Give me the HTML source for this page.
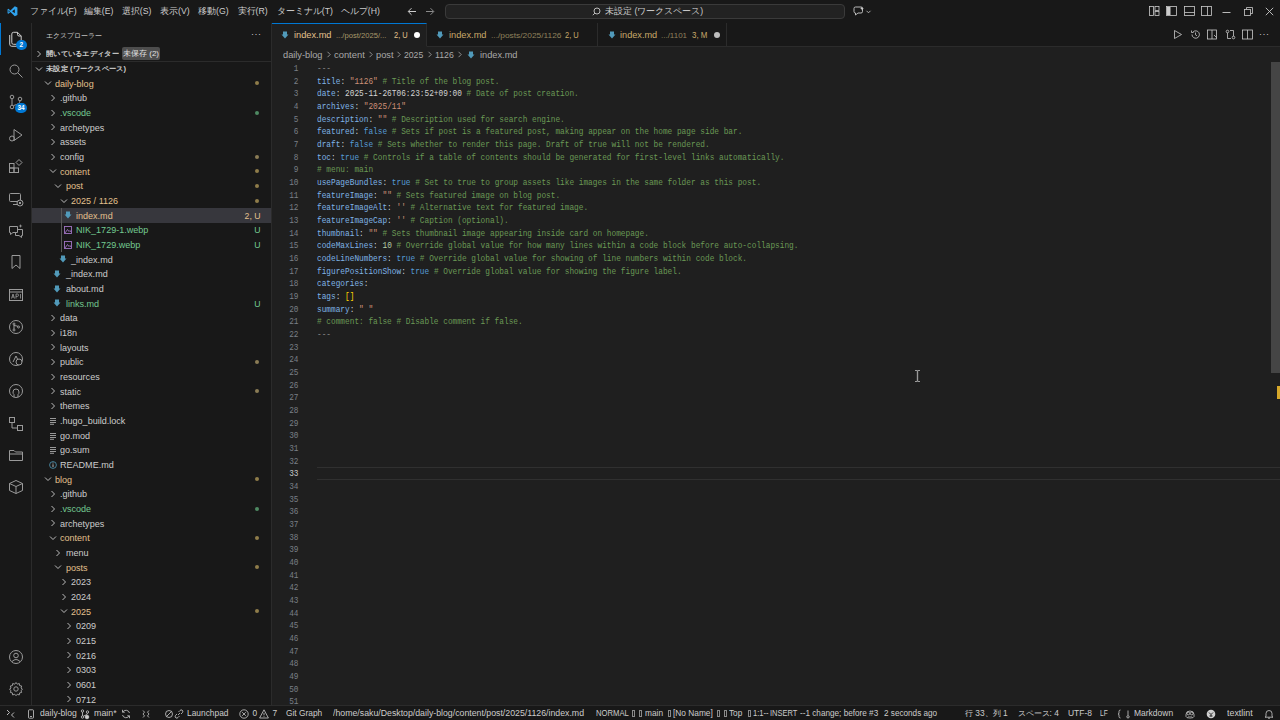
<!DOCTYPE html>
<html><head><meta charset="utf-8"><title>VS Code</title><style>
*{margin:0;padding:0;box-sizing:border-box}
html,body{width:1280px;height:720px;overflow:hidden;background:#1f1f1f;font-family:"Liberation Sans",sans-serif;color:#cccccc}
.abs{position:absolute}
#title{position:absolute;left:0;top:0;width:1280px;height:23.3px;background:#181818}
.menu{position:absolute;top:5px;font-size:8.7px;line-height:12px;color:#cccccc;white-space:nowrap}
#search{position:absolute;left:444.5px;top:3.7px;width:400.5px;height:15.8px;border:0.7px solid #3a3a3a;border-radius:4px;background:#222222}
#act{position:absolute;left:0;top:23.3px;width:32px;height:682px;background:#181818;border-right:0.67px solid #2b2b2b}
#side{position:absolute;left:32px;top:23.3px;width:239.5px;height:682px;background:#181818;border-right:0.67px solid #2b2b2b;overflow:hidden}
.row{position:absolute;left:0;width:239.5px;height:14.67px;font-size:8.7px;line-height:14.67px;white-space:nowrap}
.row .t,.row .bd{padding-top:0.5px}
.row .t{transform:scaleX(1.04);transform-origin:0 50%}
.row .t{position:absolute;top:0}
.row .ch{position:absolute;top:3.3px;width:8px;height:8px}
.row .dot{position:absolute;left:222.5px;top:5.3px;width:4px;height:4px;border-radius:50%}
.row .bd{position:absolute;right:11px;top:0;font-size:8.7px}
#tabs{position:absolute;left:271.5px;top:23.3px;width:1008.5px;height:23.3px;background:#181818;border-bottom:0.67px solid #2b2b2b}
.tab{position:absolute;top:0;height:23.3px;font-size:8.7px;line-height:23px;white-space:nowrap;border-right:0.67px solid #2b2b2b}
#crumbs{position:absolute;left:271.5px;top:46.7px;width:1008.5px;height:14.67px;font-size:8.7px;line-height:16.67px;color:#a9a9a9;white-space:nowrap}
#code{position:absolute;left:272px;top:62.7px;width:1008px;height:644px;overflow:hidden}
.ln{position:absolute;left:0;width:26.5px;text-align:right;font-family:"Liberation Mono",monospace;font-size:9.33px;line-height:12.67px;color:#7a7f87;transform:scaleX(0.83);transform-origin:100% 0}
.cl{position:absolute;left:44.5px;font-family:"Liberation Mono",monospace;font-size:9.33px;line-height:12.67px;white-space:pre;transform:scaleX(0.835);transform-origin:0 0;color:#cccccc}
.k{color:#7fb4e6}.b{color:#569cd6}.s{color:#ce9178}.c{color:#6a9955}.n{color:#b5cea8}.p{color:#d4d4d4}.y{color:#ffd700}.g{color:#8a8a8a}
#status{position:absolute;left:0;top:705.3px;width:1280px;height:14.7px;background:#181818;border-top:0.67px solid #2b2b2b;font-size:8.4px;line-height:14px;color:#cccccc;white-space:nowrap}
#status span{position:absolute;top:0}
svg{position:absolute;overflow:visible}
</style></head>
<body>
<div id="title">
<svg style="left:6.8px;top:5.6px" width="11" height="10.5" viewBox="0 0 100 100"><path d="M72 3 L97 15 V85 L72 97 L30 58 L12 73 L3 68 V32 L12 27 L30 42 Z M72 30 L46 50 L72 70 Z M13 38 V62 L25 50 Z" fill="#2fa3ee" fill-rule="evenodd"/></svg>
<div class="menu" style="left:29.5px">ファイル(F)</div>
<div class="menu" style="left:83.8px">編集(E)</div>
<div class="menu" style="left:121.8px">選択(S)</div>
<div class="menu" style="left:160px">表示(V)</div>
<div class="menu" style="left:198px">移動(G)</div>
<div class="menu" style="left:237.5px">実行(R)</div>
<div class="menu" style="left:276.8px">ターミナル(T)</div>
<div class="menu" style="left:340.8px">ヘルプ(H)</div>
<svg style="left:407px;top:6.5px" width="10" height="9" viewBox="0 0 10 9"><path d="M9 4.5H1.5M4.5 1.2L1.2 4.5L4.5 7.8" stroke="#cccccc" stroke-width="1" fill="none"/></svg>
<svg style="left:424.5px;top:6.5px" width="10" height="9" viewBox="0 0 10 9"><path d="M1 4.5H8.5M5.5 1.2L8.8 4.5L5.5 7.8" stroke="#8b8b8b" stroke-width="1" fill="none"/></svg>
<div id="search"></div>
<svg style="left:592px;top:7px" width="9" height="9" viewBox="0 0 9 9"><circle cx="5" cy="4" r="3" stroke="#cccccc" stroke-width="0.9" fill="none"/><path d="M2.9 6.1L0.8 8.2" stroke="#cccccc" stroke-width="0.9"/></svg>
<div class="menu" style="left:605px;top:5px">未設定 (ワークスペース)</div>
<svg style="left:853px;top:6px" width="12" height="10" viewBox="0 0 12 10"><path d="M1 2.5Q1 1 2.5 1H8Q9.5 1 9.5 2.5V5.5Q9.5 7 8 7H5L2.5 9V7Q1 7 1 5.5Z" stroke="#cccccc" stroke-width="0.9" fill="none"/><path d="M9 0.5L9.6 2L11 2.5L9.6 3L9 4.5L8.4 3L7 2.5L8.4 2Z" fill="#cccccc"/></svg>
<svg style="left:866px;top:9.5px" width="5" height="4" viewBox="0 0 5 4"><path d="M0.5 0.8L2.5 2.8L4.5 0.8" stroke="#cccccc" stroke-width="0.8" fill="none"/></svg>
<svg style="left:1148.5px;top:6px" width="11" height="10" viewBox="0 0 11 10"><rect x="0.5" y="0.5" width="4" height="9" stroke="#cccccc" stroke-width="0.8" fill="none"/><rect x="6" y="0.5" width="4" height="4" stroke="#cccccc" stroke-width="0.8" fill="none"/><rect x="6" y="5.5" width="4" height="4" stroke="#cccccc" stroke-width="0.8" fill="none"/></svg>
<svg style="left:1166px;top:6px" width="11" height="10" viewBox="0 0 11 10"><rect x="0.5" y="0.5" width="10" height="9" stroke="#cccccc" stroke-width="0.8" fill="none"/><rect x="1" y="1" width="3.5" height="8" fill="#cccccc"/></svg>
<svg style="left:1183.5px;top:6px" width="11" height="10" viewBox="0 0 11 10"><rect x="0.5" y="0.5" width="10" height="9" stroke="#cccccc" stroke-width="0.8" fill="none"/><path d="M0.5 6.5H10.5" stroke="#cccccc" stroke-width="0.8"/></svg>
<svg style="left:1201px;top:6px" width="11" height="10" viewBox="0 0 11 10"><rect x="0.5" y="0.5" width="10" height="9" stroke="#cccccc" stroke-width="0.8" fill="none"/><path d="M6.5 0.5V9.5" stroke="#cccccc" stroke-width="0.8"/></svg>
<svg style="left:1222px;top:6px" width="9" height="10" viewBox="0 0 9 10"><path d="M0.5 6.5H8.5" stroke="#cccccc" stroke-width="0.9"/></svg>
<svg style="left:1243.5px;top:6.5px" width="9" height="9" viewBox="0 0 9 9"><rect x="0.5" y="2.5" width="6" height="6" stroke="#cccccc" stroke-width="0.8" fill="none"/><path d="M2.5 2.5V0.5H8.5V6.5H6.5" stroke="#cccccc" stroke-width="0.8" fill="none"/></svg>
<svg style="left:1265px;top:7px" width="9" height="9" viewBox="0 0 9 9"><path d="M0.8 0.8L8.2 8.2M8.2 0.8L0.8 8.2" stroke="#cccccc" stroke-width="0.9"/></svg>
</div>
<div id="act">
<div class="abs" style="left:0;top:0;width:1.4px;height:32px;background:#0078d4"></div>
<svg style="left:8px;top:7.45px" width="16" height="16" viewBox="0 0 16 16" stroke="#cccccc" stroke-width="1" fill="none"><path d="M1.7 4V13.2Q1.7 15.3 3.8 15.3H9"/><path d="M3.8 3Q3.8 1.3 5.5 1.3H9.5L13.2 5V11.8Q13.2 13.3 11.7 13.3H5.5Q3.8 13.3 3.8 11.8Z"/><path d="M9.5 1.3V3.5Q9.5 5 11 5H13.2"/></svg>
<svg style="left:8px;top:39.45px" width="16" height="16" viewBox="0 0 16 16" stroke="#9a9a9a" stroke-width="1" fill="none"><circle cx="6.5" cy="6.5" r="4.5"/><path d="M9.8 9.8L14.5 14.5"/></svg>
<svg style="left:8px;top:71.20px" width="16" height="16" viewBox="0 0 16 16" stroke="#9a9a9a" stroke-width="1" fill="none"><circle cx="4" cy="3" r="1.8"/><circle cx="4" cy="13" r="1.8"/><circle cx="12" cy="5" r="1.8"/><path d="M4 4.8V11.2M12 6.8Q12 10 5.5 11.5"/></svg>
<svg style="left:8px;top:103.70px" width="16" height="16" viewBox="0 0 16 16" stroke="#9a9a9a" stroke-width="1" fill="none"><path d="M6 2.5L14 8L6 13.5Z"/><circle cx="4" cy="11.5" r="2.5"/></svg>
<svg style="left:8px;top:135.20px" width="16" height="16" viewBox="0 0 16 16" stroke="#9a9a9a" stroke-width="1" fill="none"><rect x="1.5" y="5.5" width="4.5" height="4.5"/><rect x="1.5" y="10" width="4.5" height="4.5"/><rect x="6" y="10" width="4.5" height="4.5"/><path d="M8 4.5L11 1.5L14 4.5L11 7.5Z"/></svg>
<svg style="left:8px;top:167.45px" width="16" height="16" viewBox="0 0 16 16" stroke="#9a9a9a" stroke-width="1" fill="none"><rect x="1.5" y="2.5" width="11" height="8" rx="1"/><path d="M5 13.5H9"/><circle cx="12" cy="12" r="3" fill="#181818"/><path d="M10.8 10.8L13.2 13.2M13.2 10.8L10.8 13.2"/></svg>
<svg style="left:8px;top:199.70px" width="16" height="16" viewBox="0 0 16 16" stroke="#9a9a9a" stroke-width="1" fill="none"><path d="M1.5 3.5H9.5V9.5H5L2.5 11.5V9.5H1.5Z"/><path d="M9.5 6.5H14.5V12.5H13.5V14.5L11 12.5H7.5V9.5"/><path d="M12.5 1L13 2.5L14.5 3L13 3.5L12.5 5L12 3.5L10.5 3L12 2.5Z" fill="#9a9a9a" stroke="none"/></svg>
<svg style="left:8px;top:231.20px" width="16" height="16" viewBox="0 0 16 16" stroke="#9a9a9a" stroke-width="1" fill="none"><path d="M4 1.5H12V14.5L8 11L4 14.5Z"/></svg>
<svg style="left:8px;top:263.70px" width="16" height="16" viewBox="0 0 16 16" stroke="#9a9a9a" stroke-width="1" fill="none"><rect x="1.5" y="2.5" width="13" height="11"/><path d="M1.5 5H14.5"/><path d="M3.5 11.5L5 7L6.5 11.5M4 10H6M8 11.5V7H9.5Q10.5 7 10.5 8.2Q10.5 9.4 9.5 9.4H8M12.5 7V11.5" stroke-width="0.8"/></svg>
<svg style="left:8px;top:296.20px" width="16" height="16" viewBox="0 0 16 16" stroke="#9a9a9a" stroke-width="1" fill="none"><circle cx="8" cy="8" r="6.5"/><circle cx="6" cy="5" r="1"/><circle cx="6" cy="11" r="1"/><circle cx="10.5" cy="8" r="1"/><path d="M6 6V10M6 6.5Q10 7 10 7.5"/></svg>
<svg style="left:8px;top:327.70px" width="16" height="16" viewBox="0 0 16 16" stroke="#9a9a9a" stroke-width="1" fill="none"><circle cx="8" cy="8" r="6.5"/><path d="M5 11L8 5L11 11"/><circle cx="11" cy="11" r="3" fill="#181818"/></svg>
<svg style="left:8px;top:359.70px" width="16" height="16" viewBox="0 0 16 16" stroke="#9a9a9a" stroke-width="1" fill="none"><circle cx="8" cy="8" r="6.5"/><path d="M6 14V11.5Q5 11 5 9Q5 6 8 6Q11 6 11 9Q11 11 10 11.5V14" /></svg>
<svg style="left:8px;top:392.45px" width="16" height="16" viewBox="0 0 16 16" stroke="#9a9a9a" stroke-width="1" fill="none"><rect x="1.5" y="1.5" width="5" height="5"/><rect x="9.5" y="9.5" width="5" height="5"/><path d="M4 6.5V12H9.5"/></svg>
<svg style="left:8px;top:423.70px" width="16" height="16" viewBox="0 0 16 16" stroke="#9a9a9a" stroke-width="1" fill="none"><path d="M1.5 3.5H6L7.5 5H14.5V13.5H1.5Z"/><path d="M1.5 7H14.5"/></svg>
<svg style="left:8px;top:456.20px" width="16" height="16" viewBox="0 0 16 16" stroke="#9a9a9a" stroke-width="1" fill="none"><path d="M8 1.5L14.5 4.5V11.5L8 14.5L1.5 11.5V4.5Z"/><path d="M1.5 4.5L8 7.5L14.5 4.5M8 7.5V14.5"/></svg>
<svg style="left:8px;top:625.70px" width="16" height="16" viewBox="0 0 16 16" stroke="#9a9a9a" stroke-width="1" fill="none"><circle cx="8" cy="8" r="6.5"/><circle cx="8" cy="6.5" r="2.3"/><path d="M4 12.5Q8 8.5 12 12.5"/></svg>
<svg style="left:8px;top:657.95px" width="16" height="16" viewBox="0 0 16 16" stroke="#9a9a9a" stroke-width="1" fill="none"><circle cx="8" cy="8" r="2.2"/><path d="M8 1.5L9.3 3.2L11.3 2.5L11.6 4.6L13.7 5L13 7L14.5 8.3L13 9.5L13.6 11.5L11.6 11.9L11.2 14L9.3 13.2L8 14.7L6.7 13.2L4.7 14L4.4 11.9L2.4 11.5L3 9.5L1.5 8.3L3 7L2.3 5L4.4 4.6L4.7 2.5L6.7 3.2Z"/></svg>
<div class="abs" style="left:16px;top:16.5px;width:10.5px;height:10.5px;border-radius:50%;background:#0078d4;color:#fff;font-size:6.5px;line-height:10.5px;text-align:center;font-weight:bold">2</div>
<div class="abs" style="left:15px;top:80px;width:12px;height:10px;border-radius:5px;background:#0078d4;color:#fff;font-size:6.5px;line-height:10.5px;text-align:center;font-weight:bold">34</div>
</div>
<div id="side">
<div class="abs" style="left:13.5px;top:7.5px;font-size:7.3px;line-height:10px;color:#cccccc;letter-spacing:0px">エクスプローラー</div>
<div class="abs" style="left:219px;top:6px;font-size:9px;color:#cccccc;letter-spacing:0.5px">···</div>
<div class="row" style="top:23.12px;color:#cccccc">
<svg class="ch" style="left:2.75px" width="8" height="8" viewBox="0 0 8 8"><path d="M2.5 1L5.5 4L2.5 7" stroke="#cccccc" stroke-width="0.9" fill="none"/></svg>
<span class="t" style="left:13.50px;font-weight:bold;font-size:7.4px;">開いているエディター</span>
</div>
<div class="row" style="top:38.12px;color:#cccccc">
<svg class="ch" style="left:2.75px" width="8" height="8" viewBox="0 0 8 8"><path d="M1 2.5L4 5.5L7 2.5" stroke="#cccccc" stroke-width="0.9" fill="none"/></svg>
<span class="t" style="left:13.50px;font-weight:bold;font-size:7.4px;">未設定 (ワークスペース)</span>
</div>
<div class="row" style="top:52.87px;color:#e2c08d">
<svg class="ch" style="left:11.50px" width="8" height="8" viewBox="0 0 8 8"><path d="M1 2.5L4 5.5L7 2.5" stroke="#cccccc" stroke-width="0.9" fill="none"/></svg>
<span class="t" style="left:22.50px;">daily-blog</span>
<span class="dot" style="background:#8f7d4a"></span>
</div>
<div class="row" style="top:67.57px;color:#cccccc">
<svg class="ch" style="left:16.50px" width="8" height="8" viewBox="0 0 8 8"><path d="M2.5 1L5.5 4L2.5 7" stroke="#cccccc" stroke-width="0.9" fill="none"/></svg>
<span class="t" style="left:28.00px;">.github</span>
</div>
<div class="row" style="top:82.27px;color:#73c991">
<svg class="ch" style="left:16.50px" width="8" height="8" viewBox="0 0 8 8"><path d="M2.5 1L5.5 4L2.5 7" stroke="#cccccc" stroke-width="0.9" fill="none"/></svg>
<span class="t" style="left:28.00px;">.vscode</span>
<span class="dot" style="background:#4e8a62"></span>
</div>
<div class="row" style="top:96.87px;color:#cccccc">
<svg class="ch" style="left:16.50px" width="8" height="8" viewBox="0 0 8 8"><path d="M2.5 1L5.5 4L2.5 7" stroke="#cccccc" stroke-width="0.9" fill="none"/></svg>
<span class="t" style="left:28.00px;">archetypes</span>
</div>
<div class="row" style="top:111.57px;color:#cccccc">
<svg class="ch" style="left:16.50px" width="8" height="8" viewBox="0 0 8 8"><path d="M2.5 1L5.5 4L2.5 7" stroke="#cccccc" stroke-width="0.9" fill="none"/></svg>
<span class="t" style="left:28.00px;">assets</span>
</div>
<div class="row" style="top:126.27px;color:#cccccc">
<svg class="ch" style="left:16.50px" width="8" height="8" viewBox="0 0 8 8"><path d="M2.5 1L5.5 4L2.5 7" stroke="#cccccc" stroke-width="0.9" fill="none"/></svg>
<span class="t" style="left:28.00px;">config</span>
<span class="dot" style="background:#8b7c55"></span>
</div>
<div class="row" style="top:140.87px;color:#e2c08d">
<svg class="ch" style="left:16.50px" width="8" height="8" viewBox="0 0 8 8"><path d="M1 2.5L4 5.5L7 2.5" stroke="#cccccc" stroke-width="0.9" fill="none"/></svg>
<span class="t" style="left:28.00px;">content</span>
<span class="dot" style="background:#8f7d4a"></span>
</div>
<div class="row" style="top:155.57px;color:#e2c08d">
<svg class="ch" style="left:21.50px" width="8" height="8" viewBox="0 0 8 8"><path d="M1 2.5L4 5.5L7 2.5" stroke="#cccccc" stroke-width="0.9" fill="none"/></svg>
<span class="t" style="left:33.50px;">post</span>
<span class="dot" style="background:#8f7d4a"></span>
</div>
<div class="row" style="top:170.27px;color:#e2c08d">
<svg class="ch" style="left:27.75px" width="8" height="8" viewBox="0 0 8 8"><path d="M1 2.5L4 5.5L7 2.5" stroke="#cccccc" stroke-width="0.9" fill="none"/></svg>
<span class="t" style="left:38.75px;">2025 / 1126</span>
<span class="dot" style="background:#8f7d4a"></span>
</div>
<div class="row" style="top:184.87px;color:#e2c08d;background:#37373d">
<svg class="ch" style="left:31.50px;top:3.2px" width="8" height="8" viewBox="0 0 8 8"><path d="M2 0.5H6V3.5H7.5L4 7.5L0.5 3.5H2Z" fill="#519aba"/></svg>
<span class="t" style="left:43.75px;">index.md</span>
<span class="bd" style="color:#e2c08d">2, U</span>
</div>
<div class="row" style="top:199.57px;color:#73c991">
<svg class="ch" style="left:31.50px;top:3.2px" width="8" height="8" viewBox="0 0 8 8"><rect x="0.5" y="0.5" width="7" height="7" fill="none" stroke="#a074c4" stroke-width="0.9"/><path d="M1 7L3.5 3.5L5 5.5L6 4.5L7 6" stroke="#a074c4" stroke-width="0.9" fill="none"/></svg>
<span class="t" style="left:43.75px;">NIK_1729-1.webp</span>
<span class="bd" style="color:#73c991">U</span>
</div>
<div class="row" style="top:214.27px;color:#73c991">
<svg class="ch" style="left:31.50px;top:3.2px" width="8" height="8" viewBox="0 0 8 8"><rect x="0.5" y="0.5" width="7" height="7" fill="none" stroke="#a074c4" stroke-width="0.9"/><path d="M1 7L3.5 3.5L5 5.5L6 4.5L7 6" stroke="#a074c4" stroke-width="0.9" fill="none"/></svg>
<span class="t" style="left:43.75px;">NIK_1729.webp</span>
<span class="bd" style="color:#73c991">U</span>
</div>
<div class="row" style="top:228.87px;color:#cccccc">
<svg class="ch" style="left:26.50px;top:3.2px" width="8" height="8" viewBox="0 0 8 8"><path d="M2 0.5H6V3.5H7.5L4 7.5L0.5 3.5H2Z" fill="#519aba"/></svg>
<span class="t" style="left:38.75px;">_index.md</span>
</div>
<div class="row" style="top:243.57px;color:#cccccc">
<svg class="ch" style="left:21.00px;top:3.2px" width="8" height="8" viewBox="0 0 8 8"><path d="M2 0.5H6V3.5H7.5L4 7.5L0.5 3.5H2Z" fill="#519aba"/></svg>
<span class="t" style="left:33.50px;">_index.md</span>
</div>
<div class="row" style="top:258.27px;color:#cccccc">
<svg class="ch" style="left:21.00px;top:3.2px" width="8" height="8" viewBox="0 0 8 8"><path d="M2 0.5H6V3.5H7.5L4 7.5L0.5 3.5H2Z" fill="#519aba"/></svg>
<span class="t" style="left:33.50px;">about.md</span>
</div>
<div class="row" style="top:272.87px;color:#73c991">
<svg class="ch" style="left:21.00px;top:3.2px" width="8" height="8" viewBox="0 0 8 8"><path d="M2 0.5H6V3.5H7.5L4 7.5L0.5 3.5H2Z" fill="#519aba"/></svg>
<span class="t" style="left:33.50px;">links.md</span>
<span class="bd" style="color:#73c991">U</span>
</div>
<div class="row" style="top:287.57px;color:#cccccc">
<svg class="ch" style="left:16.50px" width="8" height="8" viewBox="0 0 8 8"><path d="M2.5 1L5.5 4L2.5 7" stroke="#cccccc" stroke-width="0.9" fill="none"/></svg>
<span class="t" style="left:28.00px;">data</span>
</div>
<div class="row" style="top:302.27px;color:#cccccc">
<svg class="ch" style="left:16.50px" width="8" height="8" viewBox="0 0 8 8"><path d="M2.5 1L5.5 4L2.5 7" stroke="#cccccc" stroke-width="0.9" fill="none"/></svg>
<span class="t" style="left:28.00px;">i18n</span>
</div>
<div class="row" style="top:316.87px;color:#cccccc">
<svg class="ch" style="left:16.50px" width="8" height="8" viewBox="0 0 8 8"><path d="M2.5 1L5.5 4L2.5 7" stroke="#cccccc" stroke-width="0.9" fill="none"/></svg>
<span class="t" style="left:28.00px;">layouts</span>
</div>
<div class="row" style="top:331.57px;color:#cccccc">
<svg class="ch" style="left:16.50px" width="8" height="8" viewBox="0 0 8 8"><path d="M2.5 1L5.5 4L2.5 7" stroke="#cccccc" stroke-width="0.9" fill="none"/></svg>
<span class="t" style="left:28.00px;">public</span>
<span class="dot" style="background:#8b7c55"></span>
</div>
<div class="row" style="top:346.27px;color:#cccccc">
<svg class="ch" style="left:16.50px" width="8" height="8" viewBox="0 0 8 8"><path d="M2.5 1L5.5 4L2.5 7" stroke="#cccccc" stroke-width="0.9" fill="none"/></svg>
<span class="t" style="left:28.00px;">resources</span>
</div>
<div class="row" style="top:360.87px;color:#cccccc">
<svg class="ch" style="left:16.50px" width="8" height="8" viewBox="0 0 8 8"><path d="M2.5 1L5.5 4L2.5 7" stroke="#cccccc" stroke-width="0.9" fill="none"/></svg>
<span class="t" style="left:28.00px;">static</span>
<span class="dot" style="background:#8b7c55"></span>
</div>
<div class="row" style="top:375.57px;color:#cccccc">
<svg class="ch" style="left:16.50px" width="8" height="8" viewBox="0 0 8 8"><path d="M2.5 1L5.5 4L2.5 7" stroke="#cccccc" stroke-width="0.9" fill="none"/></svg>
<span class="t" style="left:28.00px;">themes</span>
</div>
<div class="row" style="top:390.27px;color:#cccccc">
<svg class="ch" style="left:16.50px;top:3.5px" width="8" height="8" viewBox="0 0 8 8"><path d="M1 1.5H7M1 3.5H7M1 5.5H7M1 7.3H5" stroke="#bbbbbb" stroke-width="0.8"/></svg>
<span class="t" style="left:28.00px;">.hugo_build.lock</span>
</div>
<div class="row" style="top:404.87px;color:#cccccc">
<svg class="ch" style="left:16.50px;top:3.5px" width="8" height="8" viewBox="0 0 8 8"><path d="M1 1.5H7M1 3.5H7M1 5.5H7M1 7.3H5" stroke="#bbbbbb" stroke-width="0.8"/></svg>
<span class="t" style="left:28.00px;">go.mod</span>
</div>
<div class="row" style="top:419.57px;color:#cccccc">
<svg class="ch" style="left:16.50px;top:3.5px" width="8" height="8" viewBox="0 0 8 8"><path d="M1 1.5H7M1 3.5H7M1 5.5H7M1 7.3H5" stroke="#bbbbbb" stroke-width="0.8"/></svg>
<span class="t" style="left:28.00px;">go.sum</span>
</div>
<div class="row" style="top:434.27px;color:#cccccc">
<svg class="ch" style="left:16.50px;top:3.2px" width="8" height="8" viewBox="0 0 8 8"><circle cx="4" cy="4" r="3.4" stroke="#519aba" stroke-width="0.8" fill="none"/><path d="M4 3.3V6" stroke="#cccccc" stroke-width="0.9"/><circle cx="4" cy="2.1" r="0.5" fill="#cccccc"/></svg>
<span class="t" style="left:28.00px;">README.md</span>
</div>
<div class="row" style="top:448.87px;color:#e2c08d">
<svg class="ch" style="left:11.50px" width="8" height="8" viewBox="0 0 8 8"><path d="M1 2.5L4 5.5L7 2.5" stroke="#cccccc" stroke-width="0.9" fill="none"/></svg>
<span class="t" style="left:22.50px;">blog</span>
<span class="dot" style="background:#8f7d4a"></span>
</div>
<div class="row" style="top:463.57px;color:#cccccc">
<svg class="ch" style="left:16.50px" width="8" height="8" viewBox="0 0 8 8"><path d="M2.5 1L5.5 4L2.5 7" stroke="#cccccc" stroke-width="0.9" fill="none"/></svg>
<span class="t" style="left:28.00px;">.github</span>
</div>
<div class="row" style="top:478.27px;color:#73c991">
<svg class="ch" style="left:16.50px" width="8" height="8" viewBox="0 0 8 8"><path d="M2.5 1L5.5 4L2.5 7" stroke="#cccccc" stroke-width="0.9" fill="none"/></svg>
<span class="t" style="left:28.00px;">.vscode</span>
<span class="dot" style="background:#4e8a62"></span>
</div>
<div class="row" style="top:492.87px;color:#cccccc">
<svg class="ch" style="left:16.50px" width="8" height="8" viewBox="0 0 8 8"><path d="M2.5 1L5.5 4L2.5 7" stroke="#cccccc" stroke-width="0.9" fill="none"/></svg>
<span class="t" style="left:28.00px;">archetypes</span>
</div>
<div class="row" style="top:507.57px;color:#e2c08d">
<svg class="ch" style="left:16.50px" width="8" height="8" viewBox="0 0 8 8"><path d="M1 2.5L4 5.5L7 2.5" stroke="#cccccc" stroke-width="0.9" fill="none"/></svg>
<span class="t" style="left:28.00px;">content</span>
<span class="dot" style="background:#8f7d4a"></span>
</div>
<div class="row" style="top:522.27px;color:#cccccc">
<svg class="ch" style="left:21.50px" width="8" height="8" viewBox="0 0 8 8"><path d="M2.5 1L5.5 4L2.5 7" stroke="#cccccc" stroke-width="0.9" fill="none"/></svg>
<span class="t" style="left:33.50px;">menu</span>
</div>
<div class="row" style="top:536.87px;color:#e2c08d">
<svg class="ch" style="left:21.50px" width="8" height="8" viewBox="0 0 8 8"><path d="M1 2.5L4 5.5L7 2.5" stroke="#cccccc" stroke-width="0.9" fill="none"/></svg>
<span class="t" style="left:33.50px;">posts</span>
<span class="dot" style="background:#8f7d4a"></span>
</div>
<div class="row" style="top:551.57px;color:#cccccc">
<svg class="ch" style="left:27.75px" width="8" height="8" viewBox="0 0 8 8"><path d="M2.5 1L5.5 4L2.5 7" stroke="#cccccc" stroke-width="0.9" fill="none"/></svg>
<span class="t" style="left:38.75px;">2023</span>
</div>
<div class="row" style="top:566.27px;color:#cccccc">
<svg class="ch" style="left:27.75px" width="8" height="8" viewBox="0 0 8 8"><path d="M2.5 1L5.5 4L2.5 7" stroke="#cccccc" stroke-width="0.9" fill="none"/></svg>
<span class="t" style="left:38.75px;">2024</span>
</div>
<div class="row" style="top:580.87px;color:#e2c08d">
<svg class="ch" style="left:27.75px" width="8" height="8" viewBox="0 0 8 8"><path d="M1 2.5L4 5.5L7 2.5" stroke="#cccccc" stroke-width="0.9" fill="none"/></svg>
<span class="t" style="left:38.75px;">2025</span>
<span class="dot" style="background:#8f7d4a"></span>
</div>
<div class="row" style="top:595.57px;color:#cccccc">
<svg class="ch" style="left:32.75px" width="8" height="8" viewBox="0 0 8 8"><path d="M2.5 1L5.5 4L2.5 7" stroke="#cccccc" stroke-width="0.9" fill="none"/></svg>
<span class="t" style="left:43.75px;">0209</span>
</div>
<div class="row" style="top:610.27px;color:#cccccc">
<svg class="ch" style="left:32.75px" width="8" height="8" viewBox="0 0 8 8"><path d="M2.5 1L5.5 4L2.5 7" stroke="#cccccc" stroke-width="0.9" fill="none"/></svg>
<span class="t" style="left:43.75px;">0215</span>
</div>
<div class="row" style="top:624.87px;color:#cccccc">
<svg class="ch" style="left:32.75px" width="8" height="8" viewBox="0 0 8 8"><path d="M2.5 1L5.5 4L2.5 7" stroke="#cccccc" stroke-width="0.9" fill="none"/></svg>
<span class="t" style="left:43.75px;">0216</span>
</div>
<div class="row" style="top:639.57px;color:#cccccc">
<svg class="ch" style="left:32.75px" width="8" height="8" viewBox="0 0 8 8"><path d="M2.5 1L5.5 4L2.5 7" stroke="#cccccc" stroke-width="0.9" fill="none"/></svg>
<span class="t" style="left:43.75px;">0303</span>
</div>
<div class="row" style="top:654.27px;color:#cccccc">
<svg class="ch" style="left:32.75px" width="8" height="8" viewBox="0 0 8 8"><path d="M2.5 1L5.5 4L2.5 7" stroke="#cccccc" stroke-width="0.9" fill="none"/></svg>
<span class="t" style="left:43.75px;">0601</span>
</div>
<div class="row" style="top:668.87px;color:#cccccc">
<svg class="ch" style="left:32.75px" width="8" height="8" viewBox="0 0 8 8"><path d="M2.5 1L5.5 4L2.5 7" stroke="#cccccc" stroke-width="0.9" fill="none"/></svg>
<span class="t" style="left:43.75px;">0712</span>
</div>
<div class="abs" style="left:90px;top:23.7px;width:38px;height:13.5px;background:#4d4d4d;border-radius:2px;color:#e0e0e0;font-size:8px;line-height:13.5px;text-align:center">未保存 (2)</div>
<div class="abs" style="left:0;top:37.9px;width:239.5px;height:0.67px;background:#2b2b2b"></div>
<div class="abs" style="left:29.2px;top:185px;width:0.7px;height:44px;background:#585858"></div>
</div>
<div id="tabs">
<div class="tab" style="left:0;width:155.5px;background:#1f1f1f;border-top:1.3px solid #0078d4;height:23.3px;border-bottom:0.67px solid #1f1f1f"></div>
<svg style="left:9.50px;top:8.2px" width="8" height="8" viewBox="0 0 8 8"><path d="M2 0.5H6V3.5H7.5L4 7.5L0.5 3.5H2Z" fill="#519aba"/></svg>
<span id="f0" class="abs" style="left:22.25px;top:0;font-size:8.7px;line-height:25.3px;color:#e2c08d;transform:scaleX(1.0634);transform-origin:0 50%">index.md</span>
<span id="f1" class="abs" style="left:64.10px;top:0;font-size:8.0px;line-height:25.3px;color:#a8996a;transform:scaleX(0.9523);transform-origin:0 50%">.../post/2025/...</span>
<span id="f2" class="abs" style="left:122.25px;top:0;font-size:8.7px;line-height:25.3px;color:#e2c08d;transform:scaleX(0.8627);transform-origin:0 50%">2, U</span>
<span class="abs" style="left:142.5px;top:9.2px;width:6px;height:6px;border-radius:50%;background:#ffffff"></span>
<div class="tab" style="left:155.5px;width:170.5px"></div>
<svg style="left:164.50px;top:8.2px" width="8" height="8" viewBox="0 0 8 8"><path d="M2 0.5H6V3.5H7.5L4 7.5L0.5 3.5H2Z" fill="#519aba"/></svg>
<span id="f3" class="abs" style="left:177.25px;top:0;font-size:8.7px;line-height:25.3px;color:#c8a86a;transform:scaleX(1.0634);transform-origin:0 50%">index.md</span>
<span id="f4" class="abs" style="left:219.25px;top:0;font-size:8.0px;line-height:25.3px;color:#8f815c;transform:scaleX(1.0449);transform-origin:0 50%">.../posts/2025/1126</span>
<span id="f5" class="abs" style="left:293.00px;top:0;font-size:8.7px;line-height:25.3px;color:#c8a86a;transform:scaleX(0.8627);transform-origin:0 50%">2, U</span>
<div class="tab" style="left:326.0px;width:129.5px"></div>
<svg style="left:336.00px;top:8.2px" width="8" height="8" viewBox="0 0 8 8"><path d="M2 0.5H6V3.5H7.5L4 7.5L0.5 3.5H2Z" fill="#519aba"/></svg>
<span id="f6" class="abs" style="left:348.50px;top:0;font-size:8.7px;line-height:25.3px;color:#c8a86a;transform:scaleX(1.0549);transform-origin:0 50%">index.md</span>
<span id="f7" class="abs" style="left:389.90px;top:0;font-size:8.0px;line-height:25.3px;color:#8f815c;transform:scaleX(0.9964);transform-origin:0 50%">.../1101</span>
<span id="f8" class="abs" style="left:420.20px;top:0;font-size:8.7px;line-height:25.3px;color:#c8a86a;transform:scaleX(0.9109);transform-origin:0 50%">3, M</span>
<span class="abs" style="left:442.5px;top:9.2px;width:6px;height:6px;border-radius:50%;background:#bdbdbd"></span>
<svg style="left:900.50px;top:6.2px" width="11" height="11" viewBox="0 0 11 11" stroke="#cccccc" stroke-width="0.8" fill="none"><path d="M2.5 1.5L9.5 5.5L2.5 9.5Z"/></svg>
<svg style="left:918.00px;top:6.2px" width="11" height="11" viewBox="0 0 11 11" stroke="#cccccc" stroke-width="0.8" fill="none"><path d="M2 5.5A3.7 3.7 0 1 0 3 3"/><path d="M1.5 1.5V3.5H3.5"/><path d="M5.5 3.5V5.8L7 6.8"/></svg>
<svg style="left:935.50px;top:6.2px" width="11" height="11" viewBox="0 0 11 11" stroke="#cccccc" stroke-width="0.8" fill="none"><rect x="0.5" y="1" width="9" height="9"/><path d="M5 1V10"/><path d="M7 6L9.5 8.5"/></svg>
<svg style="left:953.00px;top:6.2px" width="11" height="11" viewBox="0 0 11 11" stroke="#cccccc" stroke-width="0.8" fill="none"><circle cx="2.5" cy="2.5" r="1.3"/><circle cx="8.5" cy="8.5" r="1.3"/><path d="M2.5 3.8V9.5H6M8.5 7.2V1.5H5"/></svg>
<svg style="left:970.50px;top:6.2px" width="11" height="11" viewBox="0 0 11 11" stroke="#cccccc" stroke-width="0.8" fill="none"><rect x="0.5" y="1" width="10" height="9"/><path d="M5.5 1V10"/></svg>
<span class="abs" style="left:987.5px;top:1px;font-size:9px;line-height:20px;color:#cccccc;letter-spacing:0.5px">···</span>
</div>
<div id="crumbs">
<span id="f9" class="abs" style="left:11.00px;top:0;transform:scaleX(1.0622);transform-origin:0 50%">daily-blog</span>
<svg style="left:54.50px;top:4.8px" width="6" height="7" viewBox="0 0 6 7"><path d="M1.5 0.8L4.2 3.5L1.5 6.2" stroke="#a9a9a9" stroke-width="0.8" fill="none"/></svg>
<span id="f10" class="abs" style="left:62.25px;top:0;transform:scaleX(1.0789);transform-origin:0 50%">content</span>
<svg style="left:96.50px;top:4.8px" width="6" height="7" viewBox="0 0 6 7"><path d="M1.5 0.8L4.2 3.5L1.5 6.2" stroke="#a9a9a9" stroke-width="0.8" fill="none"/></svg>
<span id="f11" class="abs" style="left:104.00px;top:0;transform:scaleX(1.0657);transform-origin:0 50%">post</span>
<svg style="left:124.50px;top:4.8px" width="6" height="7" viewBox="0 0 6 7"><path d="M1.5 0.8L4.2 3.5L1.5 6.2" stroke="#a9a9a9" stroke-width="0.8" fill="none"/></svg>
<span id="f12" class="abs" style="left:132.25px;top:0;transform:scaleX(0.9960);transform-origin:0 50%">2025</span>
<svg style="left:155.50px;top:4.8px" width="6" height="7" viewBox="0 0 6 7"><path d="M1.5 0.8L4.2 3.5L1.5 6.2" stroke="#a9a9a9" stroke-width="0.8" fill="none"/></svg>
<span id="f13" class="abs" style="left:163.50px;top:0;transform:scaleX(1.0033);transform-origin:0 50%">1126</span>
<svg style="left:185.75px;top:4.8px" width="6" height="7" viewBox="0 0 6 7"><path d="M1.5 0.8L4.2 3.5L1.5 6.2" stroke="#a9a9a9" stroke-width="0.8" fill="none"/></svg>
<span id="f14" class="abs" style="left:208.00px;top:0;transform:scaleX(1.0634);transform-origin:0 50%">index.md</span>
<svg style="left:195.75px;top:4.2px" width="8" height="8" viewBox="0 0 8 8"><path d="M2 0.5H6V3.5H7.5L4 7.5L0.5 3.5H2Z" fill="#519aba"/></svg>
</div>
<div id="code">
<div class="ln" style="top:0.30px;color:#7a7f87">1</div>
<div class="cl" style="top:0.30px"><span class="g">---</span></div>
<div class="ln" style="top:12.97px;color:#7a7f87">2</div>
<div class="cl" style="top:12.97px"><span class="k">title</span><span class="p">: </span><span class="s">"1126"</span><span class="c"> # Title of the blog post.</span></div>
<div class="ln" style="top:25.63px;color:#7a7f87">3</div>
<div class="cl" style="top:25.63px"><span class="k">date</span><span class="p">: 2025-11-26T06:23:52+09:00</span><span class="c"> # Date of post creation.</span></div>
<div class="ln" style="top:38.30px;color:#7a7f87">4</div>
<div class="cl" style="top:38.30px"><span class="k">archives</span><span class="p">: </span><span class="s">"2025/11"</span></div>
<div class="ln" style="top:50.97px;color:#7a7f87">5</div>
<div class="cl" style="top:50.97px"><span class="k">description</span><span class="p">: </span><span class="s">""</span><span class="c"> # Description used for search engine.</span></div>
<div class="ln" style="top:63.63px;color:#7a7f87">6</div>
<div class="cl" style="top:63.63px"><span class="k">featured</span><span class="p">: </span><span class="b">false</span><span class="c"> # Sets if post is a featured post, making appear on the home page side bar.</span></div>
<div class="ln" style="top:76.30px;color:#7a7f87">7</div>
<div class="cl" style="top:76.30px"><span class="k">draft</span><span class="p">: </span><span class="b">false</span><span class="c"> # Sets whether to render this page. Draft of true will not be rendered.</span></div>
<div class="ln" style="top:88.97px;color:#7a7f87">8</div>
<div class="cl" style="top:88.97px"><span class="k">toc</span><span class="p">: </span><span class="b">true</span><span class="c"> # Controls if a table of contents should be generated for first-level links automatically.</span></div>
<div class="ln" style="top:101.64px;color:#7a7f87">9</div>
<div class="cl" style="top:101.64px"><span class="c"># menu: main</span></div>
<div class="ln" style="top:114.30px;color:#7a7f87">10</div>
<div class="cl" style="top:114.30px"><span class="k">usePageBundles</span><span class="p">: </span><span class="b">true</span><span class="c"> # Set to true to group assets like images in the same folder as this post.</span></div>
<div class="ln" style="top:126.97px;color:#7a7f87">11</div>
<div class="cl" style="top:126.97px"><span class="k">featureImage</span><span class="p">: </span><span class="s">""</span><span class="c"> # Sets featured image on blog post.</span></div>
<div class="ln" style="top:139.64px;color:#7a7f87">12</div>
<div class="cl" style="top:139.64px"><span class="k">featureImageAlt</span><span class="p">: </span><span class="s">''</span><span class="c"> # Alternative text for featured image.</span></div>
<div class="ln" style="top:152.30px;color:#7a7f87">13</div>
<div class="cl" style="top:152.30px"><span class="k">featureImageCap</span><span class="p">: </span><span class="s">''</span><span class="c"> # Caption (optional).</span></div>
<div class="ln" style="top:164.97px;color:#7a7f87">14</div>
<div class="cl" style="top:164.97px"><span class="k">thumbnail</span><span class="p">: </span><span class="s">""</span><span class="c"> # Sets thumbnail image appearing inside card on homepage.</span></div>
<div class="ln" style="top:177.64px;color:#7a7f87">15</div>
<div class="cl" style="top:177.64px"><span class="k">codeMaxLines</span><span class="p">: </span><span class="n">10</span><span class="c"> # Override global value for how many lines within a code block before auto-collapsing.</span></div>
<div class="ln" style="top:190.31px;color:#7a7f87">16</div>
<div class="cl" style="top:190.31px"><span class="k">codeLineNumbers</span><span class="p">: </span><span class="b">true</span><span class="c"> # Override global value for showing of line numbers within code block.</span></div>
<div class="ln" style="top:202.97px;color:#7a7f87">17</div>
<div class="cl" style="top:202.97px"><span class="k">figurePositionShow</span><span class="p">: </span><span class="b">true</span><span class="c"> # Override global value for showing the figure label.</span></div>
<div class="ln" style="top:215.64px;color:#7a7f87">18</div>
<div class="cl" style="top:215.64px"><span class="k">categories</span><span class="p">:</span></div>
<div class="ln" style="top:228.31px;color:#7a7f87">19</div>
<div class="cl" style="top:228.31px"><span class="k">tags</span><span class="p">: </span><span class="y">[]</span></div>
<div class="ln" style="top:240.97px;color:#7a7f87">20</div>
<div class="cl" style="top:240.97px"><span class="k">summary</span><span class="p">: </span><span class="s">" "</span></div>
<div class="ln" style="top:253.64px;color:#7a7f87">21</div>
<div class="cl" style="top:253.64px"><span class="c"># comment: false # Disable comment if false.</span></div>
<div class="ln" style="top:266.31px;color:#7a7f87">22</div>
<div class="cl" style="top:266.31px"><span class="g">---</span></div>
<div class="ln" style="top:278.97px;color:#7a7f87">23</div>
<div class="ln" style="top:291.64px;color:#7a7f87">24</div>
<div class="ln" style="top:304.31px;color:#7a7f87">25</div>
<div class="ln" style="top:316.98px;color:#7a7f87">26</div>
<div class="ln" style="top:329.64px;color:#7a7f87">27</div>
<div class="ln" style="top:342.31px;color:#7a7f87">28</div>
<div class="ln" style="top:354.98px;color:#7a7f87">29</div>
<div class="ln" style="top:367.64px;color:#7a7f87">30</div>
<div class="ln" style="top:380.31px;color:#7a7f87">31</div>
<div class="ln" style="top:392.98px;color:#7a7f87">32</div>
<div class="ln" style="top:405.64px;color:#cccccc">33</div>
<div class="ln" style="top:418.31px;color:#7a7f87">34</div>
<div class="ln" style="top:430.98px;color:#7a7f87">35</div>
<div class="ln" style="top:443.64px;color:#7a7f87">36</div>
<div class="ln" style="top:456.31px;color:#7a7f87">37</div>
<div class="ln" style="top:468.98px;color:#7a7f87">38</div>
<div class="ln" style="top:481.65px;color:#7a7f87">39</div>
<div class="ln" style="top:494.31px;color:#7a7f87">40</div>
<div class="ln" style="top:506.98px;color:#7a7f87">41</div>
<div class="ln" style="top:519.65px;color:#7a7f87">42</div>
<div class="ln" style="top:532.31px;color:#7a7f87">43</div>
<div class="ln" style="top:544.98px;color:#7a7f87">44</div>
<div class="ln" style="top:557.65px;color:#7a7f87">45</div>
<div class="ln" style="top:570.31px;color:#7a7f87">46</div>
<div class="ln" style="top:582.98px;color:#7a7f87">47</div>
<div class="ln" style="top:595.65px;color:#7a7f87">48</div>
<div class="ln" style="top:608.32px;color:#7a7f87">49</div>
<div class="ln" style="top:620.98px;color:#7a7f87">50</div>
<div class="ln" style="top:633.65px;color:#7a7f87">51</div>
<div class="abs" style="left:44.5px;top:403.84px;width:964px;height:13.3px;border-top:0.7px solid #303030;border-bottom:0.7px solid #303030"></div>
</div>
<div class="abs" style="left:1271px;top:61.5px;width:9px;height:311.5px;background:#454545"></div>
<div class="abs" style="left:1277px;top:386px;width:3px;height:13px;background:#d7a82a"></div>
<svg style="left:914px;top:370px" width="7" height="12" viewBox="0 0 7 12"><path d="M1 0.5H6M1 11.5H6M3.5 0.5V11.5" stroke="#ffffff" stroke-width="1.2" fill="none"/><path d="M1 0.5H6M1 11.5H6M3.5 0.5V11.5" stroke="#000" stroke-width="0.4" fill="none"/></svg>
<div id="status">
<svg style="left:6px;top:3px" width="9" height="9" viewBox="0 0 9 9"><path d="M1 1L3.5 3.5L1 6M8 3.5L5.5 6L8 8.5" stroke="#cccccc" stroke-width="0.9" fill="none"/></svg>
<span id="f15" class="" style="left:39.60px;;transform:scaleX(1.0262);transform-origin:0 50%">daily-blog</span>
<span id="f16" class="" style="left:93.75px;;transform:scaleX(1.0573);transform-origin:0 50%">main*</span>
<span id="f17" class="" style="left:186.50px;;transform:scaleX(1.0011);transform-origin:0 50%">Launchpad</span>
<span style="left:252.50px">0</span>
<span style="left:272.50px">7</span>
<span id="f18" class="" style="left:286.25px;;transform:scaleX(0.9983);transform-origin:0 50%">Git Graph</span>
<span id="f19" class="" style="left:333.00px;;transform:scaleX(1.0455);transform-origin:0 50%">/home/saku/Desktop/daily-blog/content/post/2025/1126/index.md</span>
<span id="f20" class="" style="left:595.60px;;transform:scaleX(0.9151);transform-origin:0 50%">NORMAL</span>
<span id="f21" class="" style="left:644.80px;;transform:scaleX(0.9914);transform-origin:0 50%">main</span>
<span id="f22" class="" style="left:673.00px;;transform:scaleX(0.9942);transform-origin:0 50%">[No Name]</span>
<span id="f23" class="" style="left:729.20px;;transform:scaleX(0.9840);transform-origin:0 50%">Top</span>
<span id="f24" class="" style="left:753.40px;;transform:scaleX(0.9052);transform-origin:0 50%">1:1--</span>
<span id="f25" class="" style="left:770.20px;;transform:scaleX(0.8933);transform-origin:0 50%">INSERT</span>
<span id="f26" class="" style="left:799.80px;;transform:scaleX(0.9764);transform-origin:0 50%">--1 change; before #3</span>
<span id="f27" class="" style="left:884.20px;;transform:scaleX(0.9746);transform-origin:0 50%">2 seconds ago</span>
<span style="left:965.00px">行 33、列 1</span>
<span style="left:1017.50px">スペース: 4</span>
<span id="f28" class="" style="left:1068.00px;;transform:scaleX(1.0112);transform-origin:0 50%">UTF-8</span>
<span id="f29" class="" style="left:1100.30px;;transform:scaleX(0.7872);transform-origin:0 50%">LF</span>
<span id="f30" class="" style="left:1133.90px;;transform:scaleX(1.0119);transform-origin:0 50%">Markdown</span>
<span id="f31" class="" style="left:1226.90px;;transform:scaleX(1.0612);transform-origin:0 50%">textlint</span>
<span style="left:631.60px;top:3.5px;width:3.2px;height:7.5px;border:0.7px solid #8a8a8a"></span>
<span style="left:638.60px;top:3.5px;width:3.2px;height:7.5px;border:0.7px solid #8a8a8a"></span>
<span style="left:667.50px;top:3.5px;width:3.2px;height:7.5px;border:0.7px solid #8a8a8a"></span>
<span style="left:716.70px;top:3.5px;width:3.2px;height:7.5px;border:0.7px solid #8a8a8a"></span>
<span style="left:724.00px;top:3.5px;width:3.2px;height:7.5px;border:0.7px solid #8a8a8a"></span>
<span style="left:747.50px;top:3.5px;width:3.2px;height:7.5px;border:0.7px solid #8a8a8a"></span>
<svg style="left:26.25px;top:2.3px" width="10" height="10" viewBox="0 0 10 10" stroke="#cccccc" stroke-width="0.8" fill="none"><rect x="2.5" y="0.8" width="5" height="8.4" rx="0.8"/><path d="M4 7.5H6"/></svg>
<svg style="left:80.00px;top:2.3px" width="10" height="10" viewBox="0 0 10 10" stroke="#cccccc" stroke-width="0.8" fill="none"><circle cx="2.5" cy="2" r="1.2"/><circle cx="2.5" cy="8" r="1.2"/><circle cx="7.5" cy="3" r="1.2"/><path d="M2.5 3.2V6.8M7.5 4.2Q7.5 6 3.5 7"/><circle cx="7" cy="8" r="1.8" fill="#cccccc"/></svg>
<svg style="left:121.00px;top:2.3px" width="10" height="10" viewBox="0 0 10 10" stroke="#cccccc" stroke-width="0.8" fill="none"><path d="M8.5 4A3.7 3.7 0 0 0 1.8 3M1.5 6A3.7 3.7 0 0 0 8.2 7"/><path d="M1.5 0.8V3.2H3.8M8.5 9.2V6.8H6.2"/></svg>
<svg style="left:141.00px;top:2.3px" width="10" height="10" viewBox="0 0 10 10" stroke="#cccccc" stroke-width="0.8" fill="none"><path d="M2 1.5Q5 3 2 5Q5 7 2 8.5M8 1.5Q5 3 8 5Q5 7 8 8.5"/></svg>
<svg style="left:164.00px;top:2.3px" width="10" height="10" viewBox="0 0 10 10" stroke="#cccccc" stroke-width="0.8" fill="none"><circle cx="5" cy="5" r="3.5"/><path d="M2.5 7.5L7.5 2.5"/></svg>
<svg style="left:173.75px;top:2.3px" width="10" height="10" viewBox="0 0 10 10" stroke="#cccccc" stroke-width="0.8" fill="none"><path d="M4 6L6 4M3 5L1.5 6.5Q0.5 8 2 9Q3 9.5 4 8.5L5.5 7M7 5L8.5 3.5Q9.5 2 8 1Q7 0.5 6 1.5L4.5 3"/></svg>
<svg style="left:238.75px;top:2.3px" width="10" height="10" viewBox="0 0 10 10" stroke="#cccccc" stroke-width="0.8" fill="none"><circle cx="5" cy="5" r="4.2"/><path d="M3.2 3.2L6.8 6.8M6.8 3.2L3.2 6.8"/></svg>
<svg style="left:258.75px;top:2.3px" width="10" height="10" viewBox="0 0 10 10" stroke="#cccccc" stroke-width="0.8" fill="none"><path d="M5 0.8L9.4 9H0.6Z"/><path d="M5 3.8V6.3M5 7.2V7.9"/></svg>
<svg style="left:1116.50px;top:2.3px" width="10" height="10" viewBox="0 0 10 10" stroke="#cccccc" stroke-width="0.8" fill="none"><path d="M3.5 1Q2 1 2 2.5V4Q2 5 1 5Q2 5 2 6V7.5Q2 9 3.5 9"/></svg>
<svg style="left:1122.50px;top:2.3px" width="10" height="10" viewBox="0 0 10 10" stroke="#cccccc" stroke-width="0.8" fill="none"><path d="M5 1.5V6"/><circle cx="5" cy="7.8" r="1.2"/></svg>
<svg style="left:1184.50px;top:2.3px" width="10" height="10" viewBox="0 0 10 10" stroke="#cccccc" stroke-width="0.8" fill="none"><path d="M1 5.5Q1 2 5 2Q9 2 9 5.5V7.5Q9 9 5 9Q1 9 1 7.5Z"/><rect x="2" y="3.2" width="2.6" height="2.6" rx="1"/><rect x="5.4" y="3.2" width="2.6" height="2.6" rx="1"/><path d="M4 7V8M6 7V8"/></svg>
<svg style="left:1206.00px;top:2.3px" width="10" height="10" viewBox="0 0 10 10" stroke="#cccccc" stroke-width="0.8" fill="none"><circle cx="5" cy="5" r="4.3" fill="#cfcfcf" stroke="none"/><path d="M3 3.5L5 5.5L7 3.5M5 5.5V7.5M3.5 7L6.5 7" stroke="#181818" stroke-width="0.9"/></svg>
<svg style="left:1263.70px;top:2.3px" width="10" height="10" viewBox="0 0 10 10" stroke="#cccccc" stroke-width="0.8" fill="none"><path d="M2 7.5V4.5Q2 1.5 5 1.5Q8 1.5 8 4.5V7.5L9 8.2H1Z"/><path d="M4 9.2H6"/></svg>
</div>
</body></html>
